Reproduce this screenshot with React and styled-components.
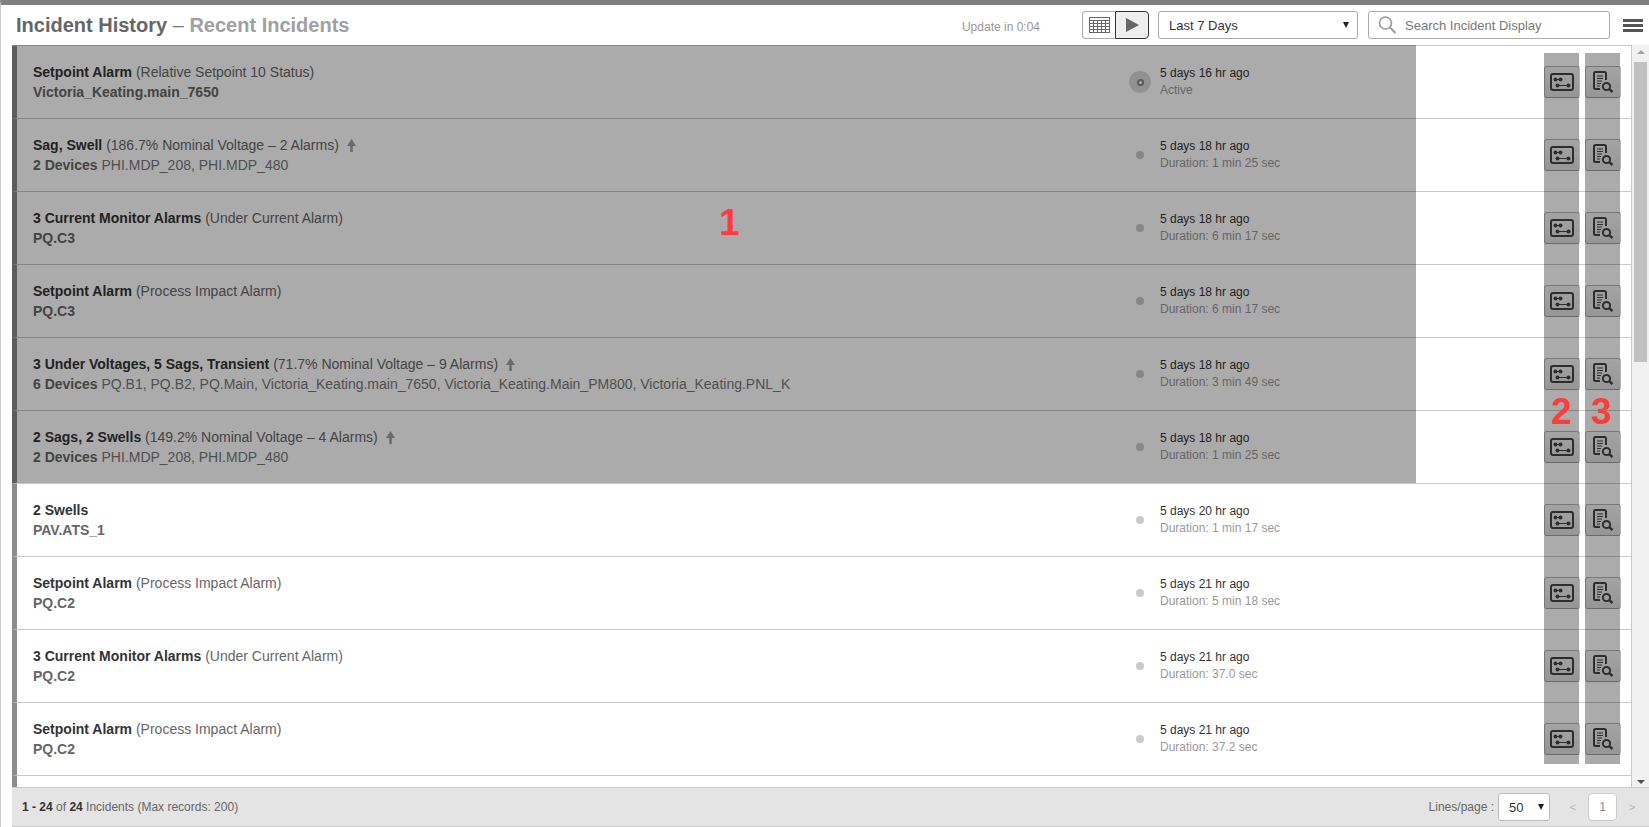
import React from 'react';
import styled, { createGlobalStyle } from 'styled-components';

const Global = createGlobalStyle`
  html, body { margin: 0; padding: 0; background: #fff; overflow: hidden; }
  body { font-family: "Liberation Sans", Arial, sans-serif; }
`;

const Page = styled.div`
  position: relative;
  width: 1649px;
  height: 827px;
  display: flex;
  flex-direction: column;
  box-sizing: border-box;
  border-top: 5px solid #808080;
  border-left: 1px solid #c8c8c8;
  overflow: hidden;
`;

const Header = styled.header`
  height: 40px;
  flex: none;
  display: flex;
  align-items: center;
  padding: 0 6px 0 15px;
`;

const Title = styled.h1`
  margin: 0 0 1px;
  font-size: 20px;
  line-height: 24px;
  font-weight: bold;
  color: #666;
  span { color: #a0a0a0; }
  em { font-style: normal; font-weight: normal; color: #777; }
`;

const UpdateNote = styled.div`
  margin-left: auto;
  margin-right: 42px;
  margin-top: 4px;
  font-size: 12px;
  color: #999;
`;

const ViewToggle = styled.div`
  display: flex;
  height: 28px;
  width: 67px;
  box-sizing: border-box;
  margin-right: 9px;
`;

const ToggleBtn = styled.button`
  flex: 1;
  padding: 0;
  display: flex;
  align-items: center;
  justify-content: center;
  background: ${p => (p.$on ? '#eee' : '#fff')};
  border: 1px solid ${p => (p.$on ? '#333' : '#aaa')};
  border-radius: ${p => (p.$on ? '0 4px 4px 0' : '4px 0 0 4px')};
  ${p => (p.$on ? '' : 'border-right: none;')}
`;

const Dropdown = styled.div`
  width: 200px;
  height: 28px;
  box-sizing: border-box;
  display: flex;
  align-items: center;
  justify-content: space-between;
  padding: 0 8px 0 10px;
  border: 1px solid #aaa;
  border-radius: 3px;
  background: #fff;
  font-size: 13px;
  color: #333;
`;

const Caret = styled.i`
  display: block;
  width: 0;
  height: 0;
  border-left: 3px solid transparent;
  border-right: 3px solid transparent;
  border-top: 6px solid #222;
`;

const Search = styled.div`
  width: 242px;
  height: 28px;
  box-sizing: border-box;
  margin-left: 10px;
  display: flex;
  align-items: center;
  gap: 8px;
  padding-left: 9px;
  border: 1px solid #aaa;
  border-radius: 3px;
  font-size: 13px;
  color: #777;
`;

const Burger = styled.div`
  margin-left: 13px;
  width: 20px;
  height: 13px;
  display: flex;
  flex-direction: column;
  justify-content: space-between;
  i { display: block; height: 3px; background: #555; }
`;

const Body = styled.div`
  flex: 1;
  min-height: 0;
  display: flex;
  margin-left: 11px;
`;

const List = styled.div`
  flex: 1;
  min-width: 0;
  overflow: hidden;
  border-top: 1px solid #c8c8c8;
  border-right: 1px solid #c8c8c8;
`;

const Row = styled.div`
  height: 73px;
  box-sizing: border-box;
  display: flex;
  align-items: center;
  border-left: 5px solid #8c8c8c;
  border-bottom: 1px solid #c8c8c8;
  padding: 0 10px 0 16px;
`;

const Main = styled.div`
  flex: 1;
  min-width: 0;
  font-size: 14px;
  line-height: 20px;
`;

const Headline = styled.div`
  display: flex;
  align-items: center;
  color: #666;
  white-space: pre;
  b { color: #333; }
  svg { margin-left: 8px; }
`;

const Devices = styled.div`
  color: #777;
  white-space: pre;
  b { color: #666; }
`;

const Status = styled.div`
  width: 415px;
  flex: none;
  display: flex;
  align-items: center;
  gap: 9px;
`;

const Marker = styled.div`
  width: 22px;
  height: 22px;
  flex: none;
  display: flex;
  align-items: center;
  justify-content: center;
  border-radius: 50%;
  background: ${p => (p.$active ? '#d8d8d8' : 'transparent')};
  &::after {
    content: '';
    box-sizing: border-box;
    width: ${p => (p.$active ? '7px' : '8px')};
    height: ${p => (p.$active ? '7px' : '8px')};
    border-radius: 50%;
    background: ${p => (p.$active ? '#fff' : '#cacaca')};
    border: ${p => (p.$active ? '2px solid #888' : 'none')};
  }
`;

const When = styled.div`
  font-size: 12px;
  line-height: 17px;
  color: #333;
  small { display: block; font-size: 12px; color: #999; }
`;

const Actions = styled.div`
  flex: none;
  display: flex;
  gap: 5px;
`;

const ActionBtn = styled.button`
  width: 36px;
  height: 32px;
  padding: 0;
  display: flex;
  align-items: center;
  justify-content: center;
  border: 1px solid #b4b4b4;
  border-bottom-color: #a0a0a0;
  border-radius: 3px;
  background: linear-gradient(#f4f4f4, #e0e0e0);
`;

const Scrollbar = styled.div`
  width: 17px;
  flex: none;
  display: flex;
  flex-direction: column;
  align-items: center;
  background: #f1f1f1;
  padding: 5px 0 3px;
  box-sizing: border-box;
`;

const Arrow = styled.i`
  display: block;
  width: 0;
  height: 0;
  border-left: 4px solid transparent;
  border-right: 4px solid transparent;
  ${p => (p.$down ? 'border-top: 4px solid #505050; margin-top: auto;' : 'border-bottom: 4px solid #a3a3a3;')}
`;

const Thumb = styled.div`
  width: 13px;
  height: 300px;
  margin-top: 8px;
  background: #c1c1c1;
`;

const Footer = styled.footer`
  height: 40px;
  flex: none;
  box-sizing: border-box;
  margin-left: 11px;
  display: flex;
  align-items: center;
  padding: 0 2px 0 10px;
  background: #e4e4e4;
  border-top: 1px solid #ccc;
  border-bottom: 1px solid #ccc;
  font-size: 12px;
  color: #666;
  b { color: #333; }
`;

const PerPage = styled.span`
  margin-left: auto;
  margin-right: 4px;
  font-size: 12px;
`;

const PerPageSelect = styled.div`
  width: 52px;
  height: 28px;
  box-sizing: border-box;
  margin-right: 8px;
  display: flex;
  align-items: center;
  justify-content: space-between;
  padding: 0 5px 0 10px;
  background: #fff;
  border: 1px solid #bbb;
  border-radius: 3px;
  font-size: 13px;
  color: #333;
`;

const PageStep = styled.span`
  width: 30px;
  text-align: center;
  color: #b5b5b5;
  font-size: 11px;
`;

const PageBox = styled.div`
  width: 29px;
  height: 28px;
  box-sizing: border-box;
  display: flex;
  align-items: center;
  justify-content: center;
  background: #fff;
  border: 1px solid #ccc;
  border-radius: 4px;
  color: #888;
`;

const Shade = styled.div`
  position: absolute;
  left: ${p => p.$x}px;
  top: ${p => p.$y}px;
  width: ${p => p.$w}px;
  height: ${p => p.$h}px;
  background: rgba(0, 0, 0, 0.33);
  pointer-events: none;
`;

const Callout = styled.div`
  position: absolute;
  left: ${p => p.$x}px;
  top: ${p => p.$y}px;
  font-size: 37px;
  line-height: 40px;
  font-weight: bold;
  color: #ff3c3c;
`;

const TableIcon = () => (
  <svg width="21" height="16" viewBox="0 0 21 16" fill="none" stroke="#666" strokeWidth="1" shapeRendering="crispEdges">
    <rect x="0.5" y="0.5" width="20" height="15" />
    <path d="M0 3.5H21M0 6.5H21M0 9.5H21M0 12.5H21M4.5 3V16M8.5 3V16M12.5 3V16M16.5 3V16" />
  </svg>
);

const PlayIcon = () => (
  <svg width="13" height="14" viewBox="0 0 13 14"><path d="M0 0L13 7L0 14Z" fill="#666" /></svg>
);

const SearchIcon = () => (
  <svg width="19" height="18" viewBox="0 0 19 18" fill="none" stroke="#999" strokeWidth="1.6">
    <circle cx="7.5" cy="7" r="6" />
    <path d="M11.8 11.4L17.5 17" strokeWidth="2" />
  </svg>
);

const RiseIcon = () => (
  <svg width="9" height="13" viewBox="0 0 9 13" fill="#a0a0a0"><path d="M4.5 0L9 7H5.8V13H3.2V7H0Z" /></svg>
);

const DiagramIcon = () => (
  <svg width="24" height="18" viewBox="0 0 24 18" fill="none" stroke="#444">
    <rect x="1" y="1" width="22" height="16" rx="2" strokeWidth="2" />
    <path d="M5 6.5H10M7 12.5H18" strokeWidth="1.2" />
    <g fill="#444" stroke="none">
      <circle cx="5.5" cy="6.5" r="2" />
      <circle cx="10.5" cy="6.5" r="2" />
      <circle cx="7.5" cy="12.5" r="2" />
      <circle cx="18.5" cy="12.5" r="2" />
    </g>
  </svg>
);

const ReportIcon = () => (
  <svg width="22" height="22" viewBox="0 0 22 22" fill="none" stroke="#444">
    <path d="M8 18H3.5A1.5 1.5 0 0 1 2 16.5V2.5A1.5 1.5 0 0 1 3.5 1H12.5A1.5 1.5 0 0 1 14 2.5V9" strokeWidth="2" />
    <path d="M5 5H11M5 7.5H11M5 10H10M5 12.5H9M5 15H8" strokeWidth="1.2" />
    <circle cx="14.5" cy="15.5" r="3.6" strokeWidth="2" />
    <path d="M17.2 18.2L20.5 21" strokeWidth="2.4" />
  </svg>
);

const incidents = [
  { name: 'Setpoint Alarm', note: ' (Relative Setpoint 10 Status)', device: 'Victoria_Keating.main_7650', ago: '5 days 16 hr ago', info: 'Active', active: true },
  { name: 'Sag, Swell', note: ' (186.7% Nominal Voltage – 2 Alarms)', rise: true, device: '2 Devices', list: ' PHI.MDP_208, PHI.MDP_480', ago: '5 days 18 hr ago', info: 'Duration: 1 min 25 sec' },
  { name: '3 Current Monitor Alarms', note: ' (Under Current Alarm)', device: 'PQ.C3', ago: '5 days 18 hr ago', info: 'Duration: 6 min 17 sec' },
  { name: 'Setpoint Alarm', note: ' (Process Impact Alarm)', device: 'PQ.C3', ago: '5 days 18 hr ago', info: 'Duration: 6 min 17 sec' },
  { name: '3 Under Voltages, 5 Sags, Transient', note: ' (71.7% Nominal Voltage – 9 Alarms)', rise: true, device: '6 Devices', list: ' PQ.B1, PQ.B2, PQ.Main, Victoria_Keating.main_7650, Victoria_Keating.Main_PM800, Victoria_Keating.PNL_K', ago: '5 days 18 hr ago', info: 'Duration: 3 min 49 sec' },
  { name: '2 Sags, 2 Swells', note: ' (149.2% Nominal Voltage – 4 Alarms)', rise: true, device: '2 Devices', list: ' PHI.MDP_208, PHI.MDP_480', ago: '5 days 18 hr ago', info: 'Duration: 1 min 25 sec' },
  { name: '2 Swells', device: 'PAV.ATS_1', ago: '5 days 20 hr ago', info: 'Duration: 1 min 17 sec' },
  { name: 'Setpoint Alarm', note: ' (Process Impact Alarm)', device: 'PQ.C2', ago: '5 days 21 hr ago', info: 'Duration: 5 min 18 sec' },
  { name: '3 Current Monitor Alarms', note: ' (Under Current Alarm)', device: 'PQ.C2', ago: '5 days 21 hr ago', info: 'Duration: 37.0 sec' },
  { name: 'Setpoint Alarm', note: ' (Process Impact Alarm)', device: 'PQ.C2', ago: '5 days 21 hr ago', info: 'Duration: 37.2 sec' },
];

const App = () => (
  <Page>
    <Global />
    <Header>
      <Title>Incident History <em>–</em> <span>Recent Incidents</span></Title>
      <UpdateNote>Update in 0:04</UpdateNote>
      <ViewToggle>
        <ToggleBtn><TableIcon /></ToggleBtn>
        <ToggleBtn $on><PlayIcon /></ToggleBtn>
      </ViewToggle>
      <Dropdown>Last 7 Days<Caret /></Dropdown>
      <Search><SearchIcon />Search Incident Display</Search>
      <Burger><i /><i /><i /></Burger>
    </Header>
    <Body>
      <List>
        {incidents.map((inc, i) => (
          <Row key={i}>
            <Main>
              <Headline><b>{inc.name}</b>{inc.note}{inc.rise && <RiseIcon />}</Headline>
              <Devices><b>{inc.device}</b>{inc.list}</Devices>
            </Main>
            <Status>
              <Marker $active={inc.active} />
              <When>{inc.ago}<small>{inc.info}</small></When>
            </Status>
            <Actions>
              <ActionBtn><DiagramIcon /></ActionBtn>
              <ActionBtn><ReportIcon /></ActionBtn>
            </Actions>
          </Row>
        ))}
        <Row />
      </List>
      <Scrollbar>
        <Arrow />
        <Thumb />
        <Arrow $down />
      </Scrollbar>
    </Body>
    <Footer>
      <span><b>1 - 24</b> of <b>24</b> Incidents (Max records: 200)</span>
      <PerPage>Lines/page :</PerPage>
      <PerPageSelect>50<Caret /></PerPageSelect>
      <PageStep>&lt;</PageStep>
      <PageBox>1</PageBox>
      <PageStep>&gt;</PageStep>
    </Footer>
    <Shade $x={11} $y={40} $w={1404} $h={438} />
    <Shade $x={1543} $y={48} $w={35} $h={711} />
    <Shade $x={1584} $y={48} $w={35} $h={711} />
    <Callout $x={718} $y={198}>1</Callout>
    <Callout $x={1550} $y={387}>2</Callout>
    <Callout $x={1590} $y={387}>3</Callout>
  </Page>
);

export default App;
